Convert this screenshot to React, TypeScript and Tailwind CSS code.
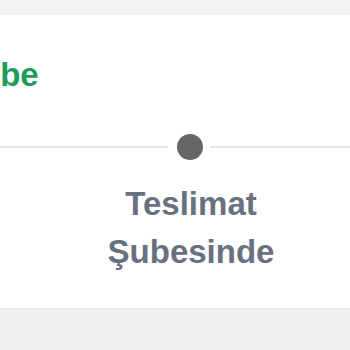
const App = () => {
  return (
    <div className="w-[350px] h-[350px] overflow-hidden bg-[#f0f0f2] font-['Liberation_Sans',Arial,sans-serif]">
      <div className="h-[15px] bg-[#f4f4f5]" />
      <div className="bg-white pt-[36px] pb-[32px] shadow-[0_1px_2px_rgba(0,0,0,0.06)]">
        <div className="-ml-[42px] text-[33px] leading-[48px] font-bold text-[#1f9d58] whitespace-nowrap">
          Şube
        </div>
        <div className="mt-[35px] flex items-center">
          <div className="h-[2px] w-[168px] bg-[#e5e5e5]" />
          <div className="ml-[9px] w-[26px] h-[26px] rounded-full bg-[#666666]" />
          <div className="ml-[7px] h-[2px] flex-1 bg-[#e5e5e5]" />
        </div>
        <div className="mt-[20px] ml-[101px] w-[180px] text-center text-[33px] leading-[48px] font-bold text-[#697180]">
          Teslimat
          <br />
          Şubesinde
        </div>
      </div>
    </div>
  );
};

export default App;
